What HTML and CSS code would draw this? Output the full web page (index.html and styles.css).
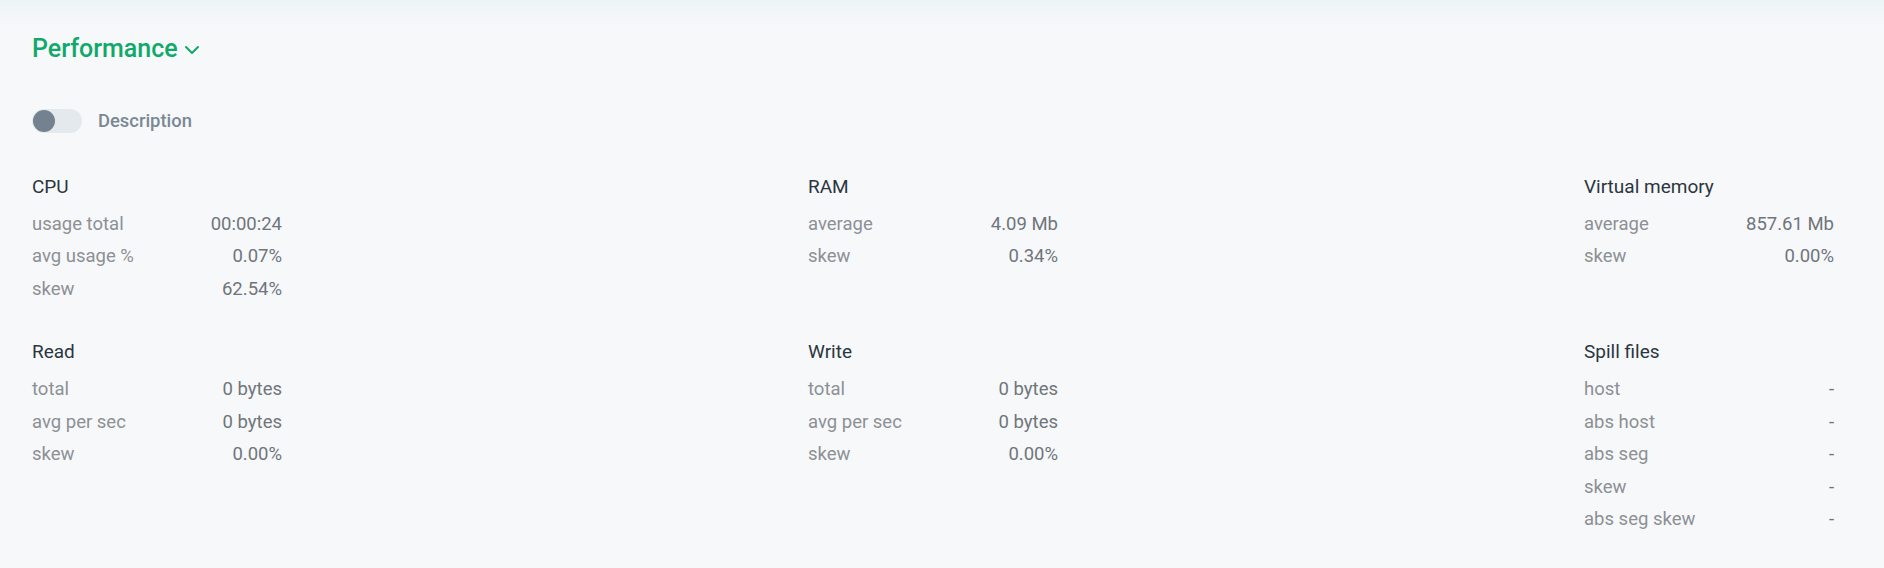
FILE: index.html
```html
<!DOCTYPE html>
<html>
<head>
<meta charset="utf-8">
<link rel="stylesheet" href="styles.css">
</head>
<body>
<div class="page">
  <div class="title">
    <span>Performance</span>
    <svg class="chev" width="16" height="10" viewBox="0 0 16 10"><path d="M2 2 L8 8 L14 2" fill="none" stroke="#11a86b" stroke-width="2" stroke-linecap="round" stroke-linejoin="round"/></svg>
  </div>
  <div class="toggle-row">
    <div class="toggle"><div class="knob"></div></div>
    <span class="toggle-label">Description</span>
  </div>
  <div class="grid">
    <div class="block">
      <div class="head">CPU</div>
      <div class="row"><span class="k">usage total</span><span class="v">00:00:24</span></div>
      <div class="row"><span class="k">avg usage %</span><span class="v">0.07%</span></div>
      <div class="row"><span class="k">skew</span><span class="v">62.54%</span></div>
    </div>
    <div class="block">
      <div class="head">RAM</div>
      <div class="row"><span class="k">average</span><span class="v">4.09 Mb</span></div>
      <div class="row"><span class="k">skew</span><span class="v">0.34%</span></div>
    </div>
    <div class="block">
      <div class="head">Virtual memory</div>
      <div class="row"><span class="k">average</span><span class="v">857.61 Mb</span></div>
      <div class="row"><span class="k">skew</span><span class="v">0.00%</span></div>
    </div>
    <div class="block">
      <div class="head">Read</div>
      <div class="row"><span class="k">total</span><span class="v">0 bytes</span></div>
      <div class="row"><span class="k">avg per sec</span><span class="v">0 bytes</span></div>
      <div class="row"><span class="k">skew</span><span class="v">0.00%</span></div>
    </div>
    <div class="block">
      <div class="head">Write</div>
      <div class="row"><span class="k">total</span><span class="v">0 bytes</span></div>
      <div class="row"><span class="k">avg per sec</span><span class="v">0 bytes</span></div>
      <div class="row"><span class="k">skew</span><span class="v">0.00%</span></div>
    </div>
    <div class="block">
      <div class="head">Spill files</div>
      <div class="row"><span class="k">host</span><span class="v">-</span></div>
      <div class="row"><span class="k">abs host</span><span class="v">-</span></div>
      <div class="row"><span class="k">abs seg</span><span class="v">-</span></div>
      <div class="row"><span class="k">skew</span><span class="v">-</span></div>
      <div class="row"><span class="k">abs seg skew</span><span class="v">-</span></div>
    </div>
  </div>
</div>
</body>
</html>
```
FILE: styles.css
```css
html, body {
  margin: 0;
  padding: 0;
}
body {
  background: #f7f8fa;
  font-family: Roboto, "Liberation Sans", sans-serif;
  width: 1884px;
  height: 568px;
  overflow: hidden;
}
.page {
  background: linear-gradient(to bottom, #edf4f5 0px, #f7f8fa 28px);
  padding: 33px 50px 0 32px;
  height: 535px;
}
.title {
  display: flex;
  align-items: center;
  gap: 6px;
  height: 32px;
  line-height: 32px;
  font-size: 25px;
  font-weight: 500;
  color: #11a86b;
}
.chev {
  margin-top: 2px;
}
.toggle-row {
  display: flex;
  align-items: center;
  gap: 16px;
  margin-top: 43.5px;
  height: 24px;
}
.toggle {
  width: 50px;
  height: 24px;
  border-radius: 12px;
  background: #e3e9ed;
  display: flex;
  align-items: center;
  padding-left: 1px;
  box-sizing: border-box;
}
.knob {
  width: 22px;
  height: 22px;
  border-radius: 50%;
  background: #73828e;
}
.toggle-label {
  font-size: 18.4px;
  line-height: 24px;
  font-weight: 500;
  color: #7a8893;
}
.grid {
  margin-top: 41px;
  display: grid;
  grid-template-columns: 250px 250px 250px;
  justify-content: space-between;
  row-gap: 33.5px;
  align-items: start;
}
.head {
  font-size: 19px;
  line-height: 26px;
  color: #2b3540;
  margin-bottom: 8.3px;
}
.row {
  display: flex;
  justify-content: space-between;
  height: 32.5px;
  line-height: 32.5px;
  font-size: 18.5px;
}
.k {
  color: #8c9095;
}
.v {
  color: #6f757b;
}
```
